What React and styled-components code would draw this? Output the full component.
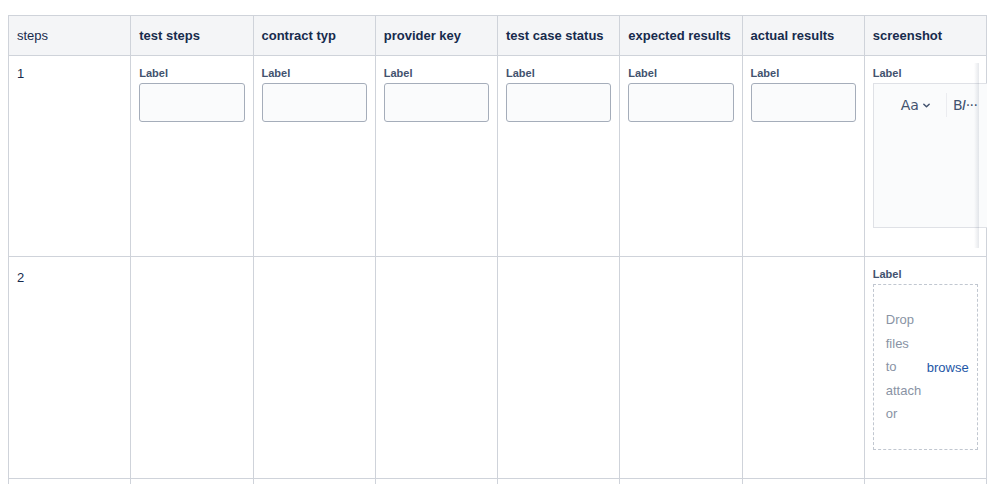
import styled, { createGlobalStyle } from "styled-components";

const GlobalStyle = createGlobalStyle`
  body {
    margin: 0;
    padding: 15px 8px 0 8px;
    background: #fff;
    font-family: "Liberation Sans", Arial, sans-serif;
    color: #172b4d;
    overflow: hidden;
  }
`;

const Table = styled.table`
  width: 979px;
  table-layout: fixed;
  border-collapse: collapse;
  font-size: 13px;
`;

const Th = styled.th`
  height: 39px;
  padding: 0 8px;
  text-align: left;
  background: #f4f5f7;
  border: 1px solid #cfd3da;
  font-weight: ${(p) => (p.$plain ? 400 : 700)};
  color: #172b4d;
  white-space: nowrap;
  overflow: hidden;
`;

const Td = styled.td`
  height: ${(p) => p.$h}px;
  padding: 10px 8px 0 8px;
  vertical-align: top;
  border: 1px solid #cfd3da;
  position: relative;
`;

const Num = styled.div`
  padding-top: ${(p) => p.$offset || 0}px;
`;

const Label = styled.label`
  display: block;
  font-size: 11px;
  line-height: 14px;
  font-weight: 700;
  color: #42526e;
  margin-bottom: 3px;
`;

const Input = styled.div`
  box-sizing: border-box;
  width: 100%;
  height: 39px;
  border: 1px solid #a5adba;
  border-radius: 3px;
  background: #fafbfc;
`;

const Editor = styled.div`
  position: relative;
  z-index: 1;
  box-sizing: border-box;
  width: calc(100% + 9px);
  height: 145px;
  border: 1px solid #dfe1e6;
  border-right: none;
  background: #fafbfc;
`;

const Toolbar = styled.div`
  display: flex;
  align-items: center;
  height: 42px;
  padding: 0 0 0 27px;
  color: #42526e;
  font-family: "DejaVu Sans", sans-serif;
  font-size: 14px;
  white-space: nowrap;
`;

const ToolGroup = styled.div`
  display: flex;
  align-items: center;
  gap: 3px;
  padding-right: 15px;
  border-right: 1px solid #ebecf0;
  height: 24px;
`;

const Format = styled.span`
  padding-left: 6px;
  letter-spacing: -0.5px;
`;

const ScrollShadow = styled.div`
  position: absolute;
  z-index: 2;
  top: 7px;
  bottom: 8px;
  right: 7px;
  width: 5px;
  background: linear-gradient(to right, rgba(9, 30, 66, 0), rgba(9, 30, 66, 0.1));
`;

const Drop = styled.div`
  box-sizing: border-box;
  height: 166px;
  border: 1px dashed #c1c7d0;
  display: flex;
  align-items: center;
  padding-left: 12px;
`;

const DropText = styled.div`
  width: 38px;
  color: #8993a4;
  font-size: 13px;
`;

const Word = styled.span`
  display: block;
  line-height: 23.5px;
`;

const Browse = styled.a`
  margin-left: 3px;
  color: #1d56a6;
  font-size: 13px;
  text-decoration: none;
`;

const Chevron = () => (
  <svg width="9" height="9" viewBox="0 0 10 10" fill="none">
    <path d="M2 3.5l3 3 3-3" stroke="#42526e" strokeWidth="1.6" strokeLinecap="round" strokeLinejoin="round" />
  </svg>
);

const columns = [
  "test steps",
  "contract typ",
  "provider key",
  "test case status",
  "expected results",
  "actual results",
];

const dropWords = ["Drop", "files", "to", "attach", "or"];

function App() {
  return (
    <>
      <GlobalStyle />
      <Table>
        <thead>
          <tr>
            <Th $plain>steps</Th>
            {columns.map((c) => (
              <Th key={c}>{c}</Th>
            ))}
            <Th>screenshot</Th>
          </tr>
        </thead>
        <tbody>
          <tr>
            <Td $h={190}>
              <Num>1</Num>
            </Td>
            {columns.map((c) => (
              <Td key={c} $h={190}>
                <Label>Label</Label>
                <Input />
              </Td>
            ))}
            <Td $h={190}>
              <Label>Label</Label>
              <Editor>
                <Toolbar>
                  <ToolGroup>
                    <span>Aa</span>
                    <Chevron />
                  </ToolGroup>
                  <Format>
                    B<i>I</i>···
                  </Format>
                </Toolbar>
              </Editor>
              <ScrollShadow />
            </Td>
          </tr>
          <tr>
            <Td $h={211}>
              <Num $offset={3}>2</Num>
            </Td>
            {columns.map((c) => (
              <Td key={c} $h={211} />
            ))}
            <Td $h={211}>
              <Label>Label</Label>
              <Drop>
                <DropText>
                  {dropWords.map((w) => (
                    <Word key={w}>{w}</Word>
                  ))}
                </DropText>
                <Browse href="#">browse</Browse>
              </Drop>
            </Td>
          </tr>
          <tr>
            <Td $h={40} />
            {columns.map((c) => (
              <Td key={c} $h={40} />
            ))}
            <Td $h={40} />
          </tr>
        </tbody>
      </Table>
    </>
  );
}

export default App;
